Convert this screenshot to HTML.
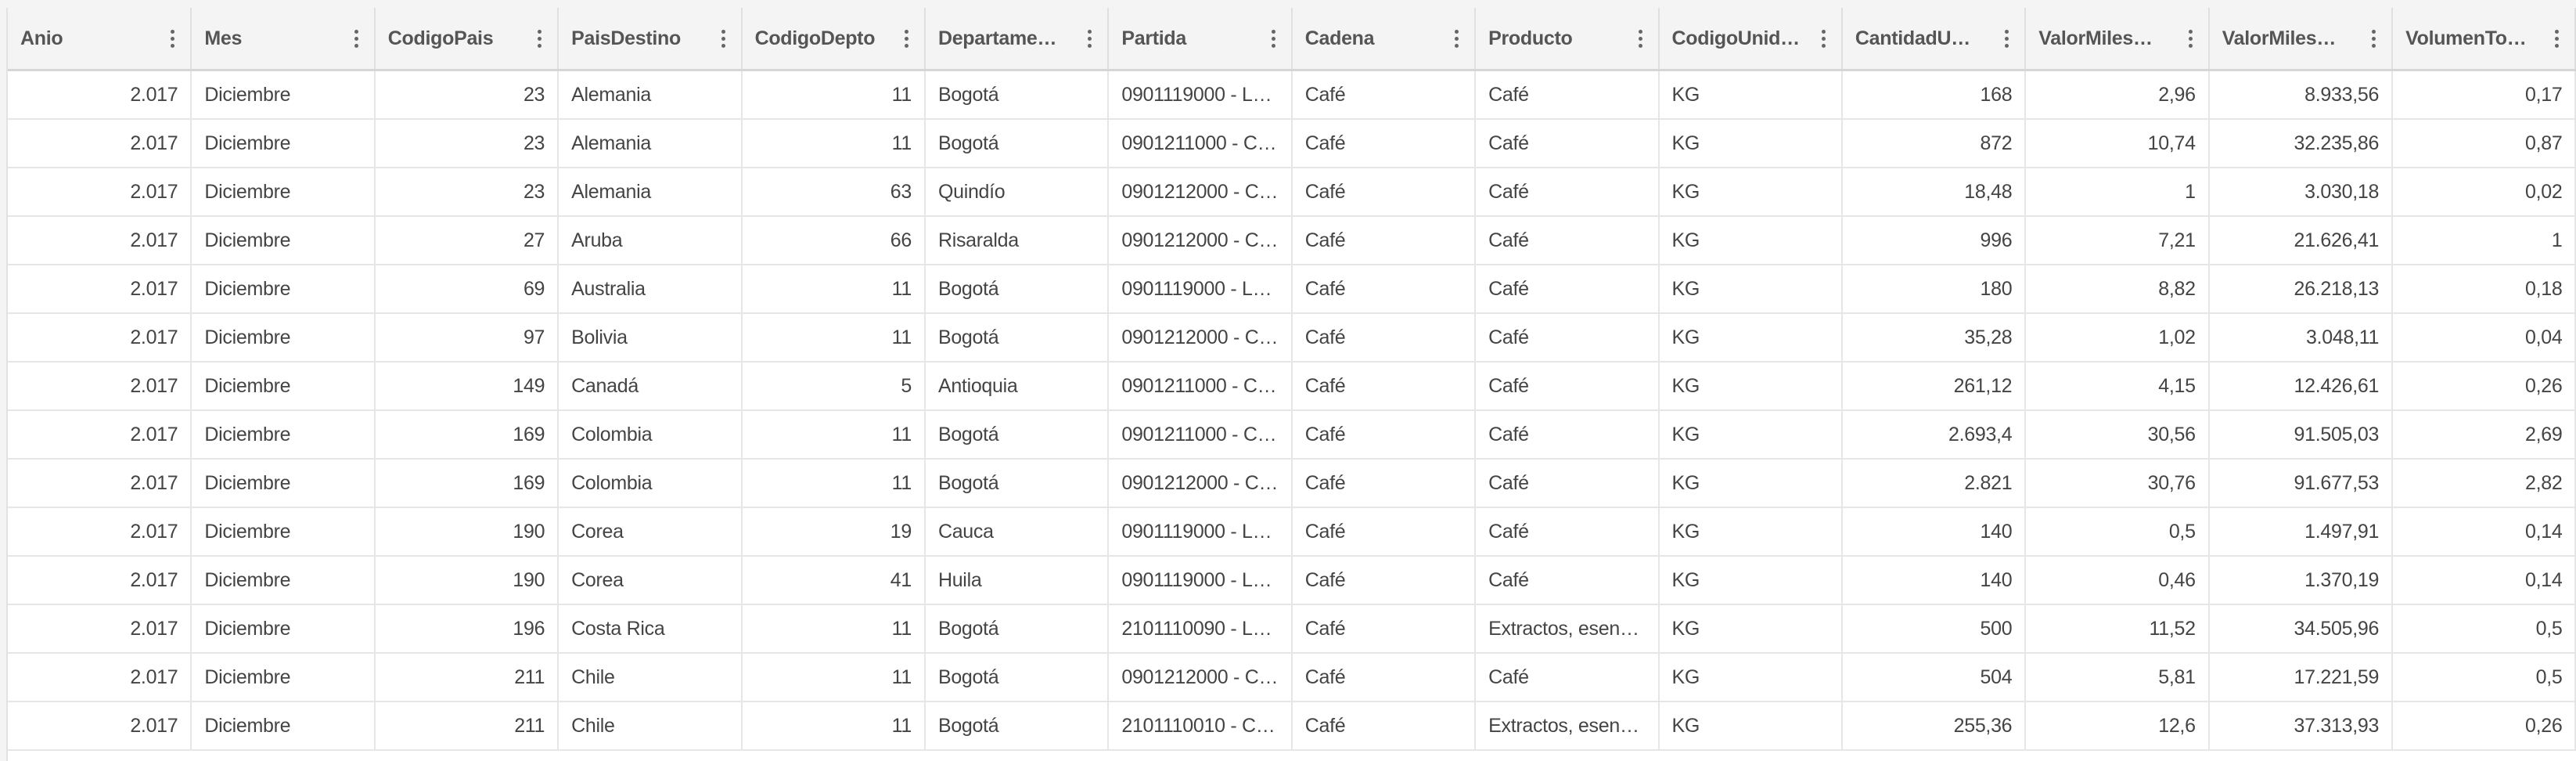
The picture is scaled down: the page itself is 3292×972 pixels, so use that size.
<!DOCTYPE html>
<html><head><meta charset="utf-8"><style>
html,body{margin:0;padding:0;background:#f4f4f4;width:3292px;height:972px;overflow:hidden}
.wrap{position:absolute;left:8px;top:10px;width:3282px;height:962px;background:#fff;border-left:2px solid #e2e2e2}
table{border-collapse:collapse;table-layout:fixed;width:3282px;font-family:"Liberation Sans Narrow","Liberation Sans",sans-serif;font-size:25px;letter-spacing:-0.3px;color:#444}
col{width:234.4px}
th{height:78px;background:#f4f4f4;border-right:2px solid #e0e0e0;border-bottom:3px solid #d6d6d6;text-align:left;font-weight:bold;color:#555;padding:0 44px 0 16px;position:relative;white-space:nowrap;overflow:hidden}
th:after{content:"";position:absolute;right:20px;top:37px;width:5px;height:5px;border-radius:50%;background:#666;box-shadow:0 -9px 0 #666,0 9px 0 #666}
td{height:60px;border-right:2px solid #e6e6e6;border-bottom:2px solid #e6e6e6;padding:0 16px;white-space:nowrap;overflow:hidden;text-overflow:ellipsis}
td.r{text-align:right}
</style></head><body><div class="wrap"><table>
<colgroup><col><col><col><col><col><col><col><col><col><col><col><col><col><col></colgroup>
<tr><th>Anio</th><th>Mes</th><th>CodigoPais</th><th>PaisDestino</th><th>CodigoDepto</th><th>Departame…</th><th>Partida</th><th>Cadena</th><th>Producto</th><th>CodigoUnid…</th><th>CantidadU…</th><th>ValorMiles…</th><th>ValorMiles…</th><th>VolumenTo…</th></tr>
<tr><td class="r">2.017</td><td>Diciembre</td><td class="r">23</td><td>Alemania</td><td class="r">11</td><td>Bogotá</td><td>0901119000 - Los demás</td><td>Café</td><td>Café</td><td>KG</td><td class="r">168</td><td class="r">2,96</td><td class="r">8.933,56</td><td class="r">0,17</td></tr>
<tr><td class="r">2.017</td><td>Diciembre</td><td class="r">23</td><td>Alemania</td><td class="r">11</td><td>Bogotá</td><td>0901211000 - Café</td><td>Café</td><td>Café</td><td>KG</td><td class="r">872</td><td class="r">10,74</td><td class="r">32.235,86</td><td class="r">0,87</td></tr>
<tr><td class="r">2.017</td><td>Diciembre</td><td class="r">23</td><td>Alemania</td><td class="r">63</td><td>Quindío</td><td>0901212000 - Café</td><td>Café</td><td>Café</td><td>KG</td><td class="r">18,48</td><td class="r">1</td><td class="r">3.030,18</td><td class="r">0,02</td></tr>
<tr><td class="r">2.017</td><td>Diciembre</td><td class="r">27</td><td>Aruba</td><td class="r">66</td><td>Risaralda</td><td>0901212000 - Café</td><td>Café</td><td>Café</td><td>KG</td><td class="r">996</td><td class="r">7,21</td><td class="r">21.626,41</td><td class="r">1</td></tr>
<tr><td class="r">2.017</td><td>Diciembre</td><td class="r">69</td><td>Australia</td><td class="r">11</td><td>Bogotá</td><td>0901119000 - Los demás</td><td>Café</td><td>Café</td><td>KG</td><td class="r">180</td><td class="r">8,82</td><td class="r">26.218,13</td><td class="r">0,18</td></tr>
<tr><td class="r">2.017</td><td>Diciembre</td><td class="r">97</td><td>Bolivia</td><td class="r">11</td><td>Bogotá</td><td>0901212000 - Café</td><td>Café</td><td>Café</td><td>KG</td><td class="r">35,28</td><td class="r">1,02</td><td class="r">3.048,11</td><td class="r">0,04</td></tr>
<tr><td class="r">2.017</td><td>Diciembre</td><td class="r">149</td><td>Canadá</td><td class="r">5</td><td>Antioquia</td><td>0901211000 - Café</td><td>Café</td><td>Café</td><td>KG</td><td class="r">261,12</td><td class="r">4,15</td><td class="r">12.426,61</td><td class="r">0,26</td></tr>
<tr><td class="r">2.017</td><td>Diciembre</td><td class="r">169</td><td>Colombia</td><td class="r">11</td><td>Bogotá</td><td>0901211000 - Café</td><td>Café</td><td>Café</td><td>KG</td><td class="r">2.693,4</td><td class="r">30,56</td><td class="r">91.505,03</td><td class="r">2,69</td></tr>
<tr><td class="r">2.017</td><td>Diciembre</td><td class="r">169</td><td>Colombia</td><td class="r">11</td><td>Bogotá</td><td>0901212000 - Café</td><td>Café</td><td>Café</td><td>KG</td><td class="r">2.821</td><td class="r">30,76</td><td class="r">91.677,53</td><td class="r">2,82</td></tr>
<tr><td class="r">2.017</td><td>Diciembre</td><td class="r">190</td><td>Corea</td><td class="r">19</td><td>Cauca</td><td>0901119000 - Los demás</td><td>Café</td><td>Café</td><td>KG</td><td class="r">140</td><td class="r">0,5</td><td class="r">1.497,91</td><td class="r">0,14</td></tr>
<tr><td class="r">2.017</td><td>Diciembre</td><td class="r">190</td><td>Corea</td><td class="r">41</td><td>Huila</td><td>0901119000 - Los demás</td><td>Café</td><td>Café</td><td>KG</td><td class="r">140</td><td class="r">0,46</td><td class="r">1.370,19</td><td class="r">0,14</td></tr>
<tr><td class="r">2.017</td><td>Diciembre</td><td class="r">196</td><td>Costa Rica</td><td class="r">11</td><td>Bogotá</td><td>2101110090 - Los demás</td><td>Café</td><td>Extractos, esencias</td><td>KG</td><td class="r">500</td><td class="r">11,52</td><td class="r">34.505,96</td><td class="r">0,5</td></tr>
<tr><td class="r">2.017</td><td>Diciembre</td><td class="r">211</td><td>Chile</td><td class="r">11</td><td>Bogotá</td><td>0901212000 - Café</td><td>Café</td><td>Café</td><td>KG</td><td class="r">504</td><td class="r">5,81</td><td class="r">17.221,59</td><td class="r">0,5</td></tr>
<tr><td class="r">2.017</td><td>Diciembre</td><td class="r">211</td><td>Chile</td><td class="r">11</td><td>Bogotá</td><td>2101110010 - Café</td><td>Café</td><td>Extractos, esencias</td><td>KG</td><td class="r">255,36</td><td class="r">12,6</td><td class="r">37.313,93</td><td class="r">0,26</td></tr>
</table></div></body></html>
